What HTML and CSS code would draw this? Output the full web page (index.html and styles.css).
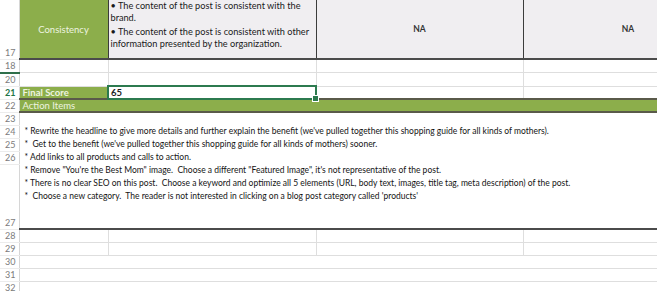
FILE: index.html
```html
<!DOCTYPE html>
<html lang="en">
<head>
    <meta charset="UTF-8">
    <title>Blog Post Scorecard</title>
    <link rel="stylesheet" href="styles.css">
</head>
<body>

<table class="sheet">
    <colgroup>
        <col class="col-hdr">
        <col class="col-a">
        <col class="col-b">
        <col class="col-c">
        <col class="col-d">
    </colgroup>

    <tr class="row-tall">
        <th>17</th>
        <td class="green label-center">Consistency</td>
        <td class="shade criteria">
            <div>• The content of the post is consistent with the</div>
            <div>brand.</div>
            <div class="gap">• The content of the post is consistent with other</div>
            <div>information presented by the organization.</div>
        </td>
        <td class="shade na">NA</td>
        <td class="shade na">NA</td>
    </tr>

    <tr class="row">
        <th class="hidden-after">18</th>
        <td></td><td></td><td></td><td></td>
    </tr>
    <tr class="row">
        <th>20</th>
        <td></td><td></td><td></td><td></td>
    </tr>

    <tr class="row">
        <th class="active">21</th>
        <td class="green score-label">Final Score</td>
        <td class="selected"><span class="score">65</span><span class="handle"></span></td>
        <td></td><td></td>
    </tr>

    <tr class="row">
        <th>22</th>
        <td class="green banner" colspan="4">Action Items</td>
    </tr>

    <tr class="row">
        <th>23</th>
        <td class="blank" colspan="4"></td>
    </tr>

    <tr class="row">
        <th>24</th>
        <td class="notes" colspan="4" rowspan="4">
            <div>* Rewrite the headline to give more details and further explain the benefit (we've pulled together this shopping guide for all kinds of mothers).</div>
            <div>*&nbsp; Get to the benefit (we've pulled together this shopping guide for all kinds of mothers) sooner.</div>
            <div>* Add links to all products and calls to action.</div>
            <div>* Remove "You're the Best Mom" image.&nbsp; Choose a different "Featured Image", it's not representative of the post.</div>
            <div>* There is no clear SEO on this post.&nbsp; Choose a keyword and optimize all 5 elements (URL, body text, images, title tag, meta description) of the post.</div>
            <div>*&nbsp; Choose a new category.&nbsp; The reader is not interested in clicking on a blog post category called 'products'</div>
        </td>
    </tr>
    <tr class="row"><th>25</th></tr>
    <tr class="row"><th>26</th></tr>
    <tr class="row-notes"><th>27</th></tr>

    <tr class="row">
        <th>28</th>
        <td></td><td></td><td></td><td></td>
    </tr>
    <tr class="row">
        <th>29</th>
        <td></td><td></td><td></td><td></td>
    </tr>
    <tr class="row">
        <th>30</th>
        <td class="open" colspan="4"></td>
    </tr>
    <tr class="row">
        <th>31</th>
        <td class="open" colspan="4"></td>
    </tr>
    <tr class="row">
        <th>32</th>
        <td class="open" colspan="4"></td>
    </tr>
</table>

</body>
</html>
```

FILE: styles.css
```css
body {
    margin: 0;
    background-color: #ffffff;
    font-family: Lato, "Liberation Sans", sans-serif;
    font-size: 9px;
    color: #1e1e1e;
    overflow: hidden;
    width: 657px;
    height: 291px;
}
.sheet {
    border-collapse: collapse;
    table-layout: fixed;
    width: 733px;
}
.col-hdr { width: 19px; }
.col-a { width: 89px; }
.col-b { width: 208px; }
.col-c { width: 207px; }
.col-d { width: 210px; }

.sheet th,
.sheet td {
    padding: 0;
    white-space: nowrap;
    overflow: hidden;
}
.sheet th {
    font-weight: normal;
    color: #7b7b7b;
    text-align: right;
    padding-right: 3px;
    vertical-align: bottom;
    line-height: 12px;
    border-right: 1px solid #d6d6d6;
    border-bottom: 1px solid #ececec;
}
.sheet td {
    border-right: 1px solid #dedede;
    border-bottom: 1px solid #dedede;
}
.row { height: 13px; }
.row-tall { height: 59px; }
.row-notes { height: 65px; }

/* row 17 */
.row-tall td {
    border-bottom: 2px solid #4b4b4b;
    border-right: 1px solid #3c3c3c;
}
.green {
    background-color: #8cae4b;
    color: #eef4e0;
}
.label-center {
    text-align: center;
    vertical-align: middle;
    font-size: 9.5px;
}
.shade {
    background-color: #f0eef1;
}
.criteria {
    vertical-align: top;
    padding-left: 2px !important;
    font-size: 9.2px;
    line-height: 12px;
    color: #1a1a1a;
}
.criteria .gap { margin-top: 2px; }
.na {
    text-align: center;
    vertical-align: middle;
    font-weight: bold;
    font-size: 8.5px;
    color: #333;
}

/* hidden row 19 marker */
.hidden-after {
    border-bottom: 2px solid #2f6f4a !important;
}
.active {
    color: #217346 !important;
    font-weight: bold !important;
}

/* row 21 */
.score-label {
    font-weight: bold;
    font-size: 9.5px;
    padding-left: 3px !important;
    border: 1px solid #3f3f3f !important;
}
.selected {
    position: relative;
    border: 2px solid #2c7a4f !important;
    overflow: visible !important;
}
.score {
    font-weight: bold;
    font-size: 9.5px;
    padding-left: 2px;
}
.handle {
    position: absolute;
    right: -4px;
    bottom: -4px;
    width: 5px;
    height: 5px;
    background-color: #2c7a4f;
    border: 1px solid #ffffff;
}

/* row 22 */
.banner {
    font-size: 9.5px;
    padding-left: 3px !important;
    border-top: 2px solid #5a5a4a !important;
    border-bottom: 2px solid #5a5a4a !important;
    border-right: none !important;
}

.blank {
    border-right: none !important;
    border-bottom: none !important;
}

.notes {
    vertical-align: top;
    padding-left: 5px !important;
    font-size: 8.5px;
    line-height: 13px;
    color: #141414;
    border-right: none !important;
    border-bottom: 2px solid #4b4b4b !important;
}

.open {
    border-right: none !important;
}
```
